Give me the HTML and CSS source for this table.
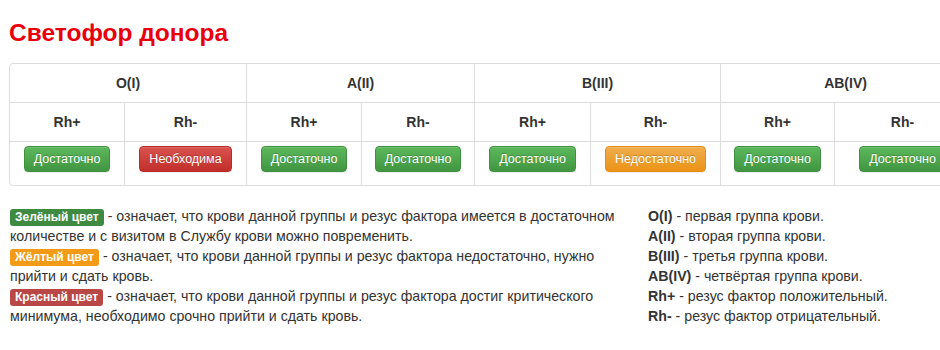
FILE: index.html
```html
<!DOCTYPE html>
<html lang="ru">
<head>
<meta charset="utf-8">
<title>Светофор донора</title>
<link rel="stylesheet" href="styles.css">
</head>
<body>
<div class="page">
  <h1 class="title">Светофор донора</h1>
  <table class="donor">
    <colgroup>
      <col class="c1"><col class="c2"><col class="c3"><col class="c4">
      <col class="c5"><col class="c6"><col class="c7"><col class="c8">
    </colgroup>
    <tr class="r-group">
      <th colspan="2" class="first">O(I)</th>
      <th colspan="2">A(II)</th>
      <th colspan="2">B(III)</th>
      <th colspan="2">AB(IV)</th>
    </tr>
    <tr class="r-rh">
      <th class="first">Rh+</th><th>Rh-</th>
      <th>Rh+</th><th>Rh-</th>
      <th>Rh+</th><th>Rh-</th>
      <th>Rh+</th><th>Rh-</th>
    </tr>
    <tr class="r-btn">
      <td class="first"><span class="btn ok">Достаточно</span></td>
      <td><span class="btn need">Необходима</span></td>
      <td><span class="btn ok">Достаточно</span></td>
      <td><span class="btn ok">Достаточно</span></td>
      <td><span class="btn ok">Достаточно</span></td>
      <td><span class="btn low">Недостаточно</span></td>
      <td><span class="btn ok">Достаточно</span></td>
      <td><span class="btn ok">Достаточно</span></td>
    </tr>
  </table>
  <div class="legend">
    <div class="legend-left">
      <p><span class="label green">Зелёный цвет</span> - означает, что крови данной группы и резус фактора имеется в достаточном количестве и с визитом в Службу крови можно повременить.</p>
      <p><span class="label orange">Жёлтый цвет</span> - означает, что крови данной группы и резус фактора недостаточно, нужно прийти и сдать кровь.</p>
      <p><span class="label red">Красный цвет</span> - означает, что крови данной группы и резус фактора достиг критического минимума, необходимо срочно прийти и сдать кровь.</p>
    </div>
    <ul class="legend-right">
      <li><b>O(I)</b> - первая группа крови.</li>
      <li><b>A(II)</b> - вторая группа крови.</li>
      <li><b>B(III)</b> - третья группа крови.</li>
      <li><b>AB(IV)</b> - четвёртая группа крови.</li>
      <li><b>Rh+</b> - резус фактор положительный.</li>
      <li><b>Rh-</b> - резус фактор отрицательный.</li>
    </ul>
  </div>
</div>
</body>
</html>
```
FILE: styles.css
```css
html { overflow: hidden; }
body {
  margin: 0;
  background: #fff;
  font-family: "Liberation Sans", Arial, sans-serif;
  color: #333;
}
.page { padding: 18px 0 0 9px; }
.title {
  margin: 0 0 15px;
  font-size: 24.5px;
  line-height: 30px;
  font-weight: bold;
  color: #e8000b;
}
.donor {
  width: 960px;
  table-layout: fixed;
  border-collapse: separate;
  border-spacing: 0;
  border: 1px solid #ddd;
  border-radius: 4px;
}
.c1 { width: 114px; } .c2 { width: 122px; } .c3 { width: 115px; } .c4 { width: 113px; }
.c5 { width: 116px; } .c6 { width: 130px; } .c7 { width: 114px; } .c8 { width: 136px; }
.donor th, .donor td {
  border-left: 1px solid #ddd;
  border-top: 1px solid #ddd;
  text-align: center;
  padding: 0;
}
.donor .first { border-left: 0; }
.donor .r-group th { border-top: 0; height: 38px; }
.donor th {
  font-size: 14px;
  font-weight: bold;
  color: #333;
}
.r-rh th { height: 38px; }
.r-btn td { height: 44px; vertical-align: top; padding-top: 4px; box-sizing: border-box; }
.btn {
  display: inline-block;
  font-size: 12.5px;
  line-height: 18px;
  padding: 3px 9px;
  border: 1px solid;
  border-radius: 4px;
  color: #fff;
  text-shadow: 0 -1px 0 rgba(0,0,0,.2);
  box-shadow: inset 0 1px 0 rgba(255,255,255,.15), 0 1px 1px rgba(0,0,0,.075);
}
.btn.ok {
  background-image: linear-gradient(to bottom, #5cb85c 0, #419641 100%);
  border-color: #3e8f3e;
}
.btn.need {
  background-image: linear-gradient(to bottom, #d9534f 0, #c12e2a 100%);
  border-color: #b92c28;
}
.btn.low {
  background-image: linear-gradient(to bottom, #f0ad4e 0, #eb9316 100%);
  border-color: #e38d13;
}
.legend {
  display: flex;
  margin-top: 20px;
  font-size: 14.2px;
  line-height: 20px;
}
.legend-left { width: 630px; padding-left: 1px; box-sizing: border-box; }
.legend-left p { margin: 0; max-width: 612px; }
.label {
  display: inline-block;
  font-size: 12px;
  font-weight: bold;
  line-height: 14px;
  padding: 1px 5px 2px;
  border-radius: 3px;
  color: #fff;
}
.label.green { background: #3d8a40; }
.label.orange { background: #f39a17; }
.label.red { background: #b94745; }
.legend-right {
  list-style: none;
  margin: 0 0 0 9px;
  padding: 0;
}
```
